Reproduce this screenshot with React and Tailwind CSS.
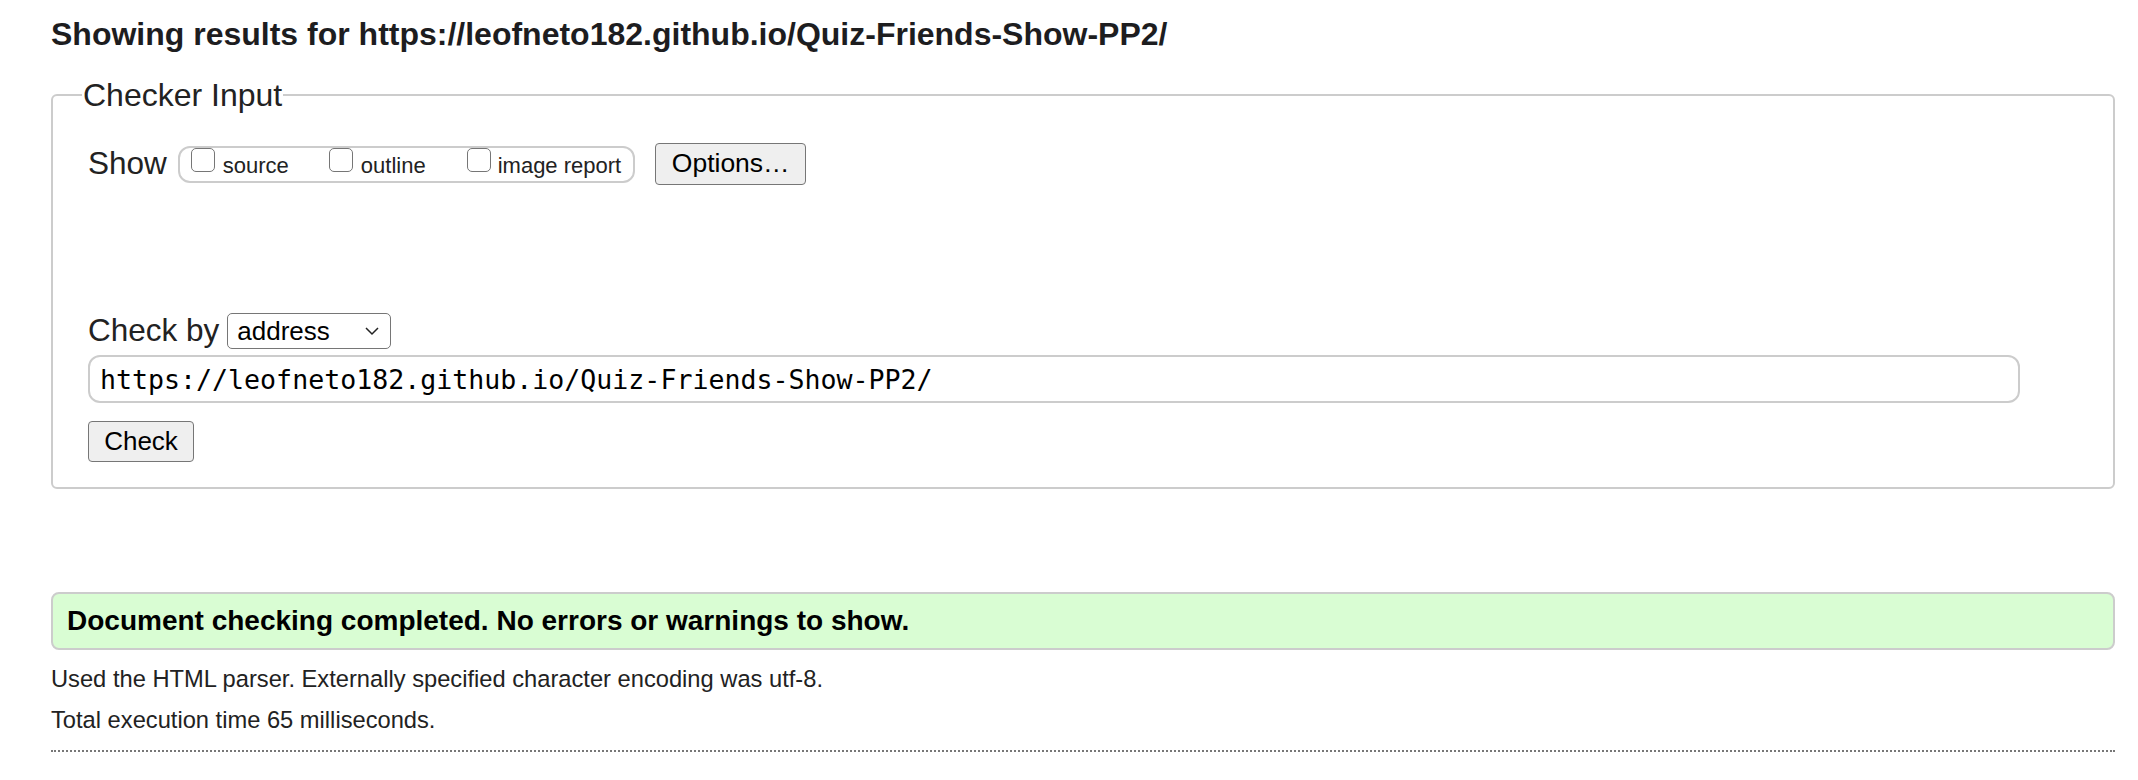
import React from 'react';

function Box({ className = '' }) {
  return (
    <input
      type="checkbox"
      readOnly
      className={`appearance-none w-[24px] h-[24px] border-[1.5px] border-[#767676] rounded-[5px] bg-white shrink-0 ${className}`}
    />
  );
}

export default function App() {
  const url = 'https://leofneto182.github.io/Quiz-Friends-Show-PP2/';

  return (
    <div className="min-h-screen bg-white pl-[51px] pr-[23px] text-[#222] font-['Liberation_Sans',Arial,sans-serif]">
      {/* Title */}
      <h2 className="pt-[14px] text-[32px] leading-[40px] font-bold text-[#1d1d1f]">
        Showing results for {url}
      </h2>

      {/* Checker Input */}
      <fieldset className="mt-[22px] border-2 border-[#cccccc] rounded-[6px] px-[29px] pt-[29px] pb-[25px]">
        <legend className="px-[1px] text-[32px] leading-[38px]">Checker Input</legend>

        <div className="pl-[6px]">
          <div className="flex items-center h-[42px]">
            <span className="text-[31.5px] leading-none">Show</span>
            <div className="ml-[11px] h-[37px] border-2 border-[#cccccc] rounded-[12px] flex items-start pl-[11px] pr-[12px]">
              <Box />
              <span className="ml-[8px] mt-[6px] text-[22px] leading-[24px]">source</span>
              <Box className="ml-[40px]" />
              <span className="ml-[8px] mt-[6px] text-[22px] leading-[24px]">outline</span>
              <Box className="ml-[41px]" />
              <span className="ml-[7px] mt-[6px] text-[22px] leading-[24px]">image report</span>
            </div>
            <button className="ml-[20px] w-[151px] h-[42px] border-[1.5px] border-[#767676] rounded-[4px] bg-[#efefef] text-[26.5px] text-black">
              Options…
            </button>
          </div>

          <div className="mt-[128px] flex items-center h-[36px]">
            <span className="text-[31.5px] leading-none">Check by</span>
            <div className="ml-[8px] w-[164px] h-[36px] border-[1.5px] border-[#767676] rounded-[5px] flex items-center justify-between pl-[9px] pr-[10px] text-[26px] text-black">
              <span>address</span>
              <svg width="16" height="10" viewBox="0 0 16 10" fill="none" stroke="#222" strokeWidth="1.5">
                <path d="M2 2l6 6 6-6" />
              </svg>
            </div>
          </div>

          <input
            readOnly
            value={url}
            className="mt-[6px] block h-[48px] w-[1932px] border-2 border-[#cccccc] rounded-[12px] pl-[10px] text-[26.6px] text-black font-['DejaVu_Sans_Mono',monospace] outline-none"
          />

          <button className="mt-[18px] block w-[106px] h-[41px] border-[1.5px] border-[#767676] rounded-[4px] bg-[#efefef] text-[26px] text-black">
            Check
          </button>
        </div>
      </fieldset>

      {/* Result */}
      <div className="mt-[103px] h-[58px] border-2 border-[#cccccc] rounded-[8px] bg-[#d9fdd3] flex items-center pl-[14px] text-[28px] font-bold text-black">
        Document checking completed. No errors or warnings to show.
      </div>

      <p className="mt-[14px] text-[23.7px] leading-[30px]">
        Used the HTML parser. Externally specified character encoding was utf-8.
      </p>
      <p className="mt-[11px] text-[23.7px] leading-[30px]">Total execution time 65 milliseconds.</p>

      <div className="mt-[15px] border-t-2 border-dotted border-[#777]"></div>
    </div>
  );
}
